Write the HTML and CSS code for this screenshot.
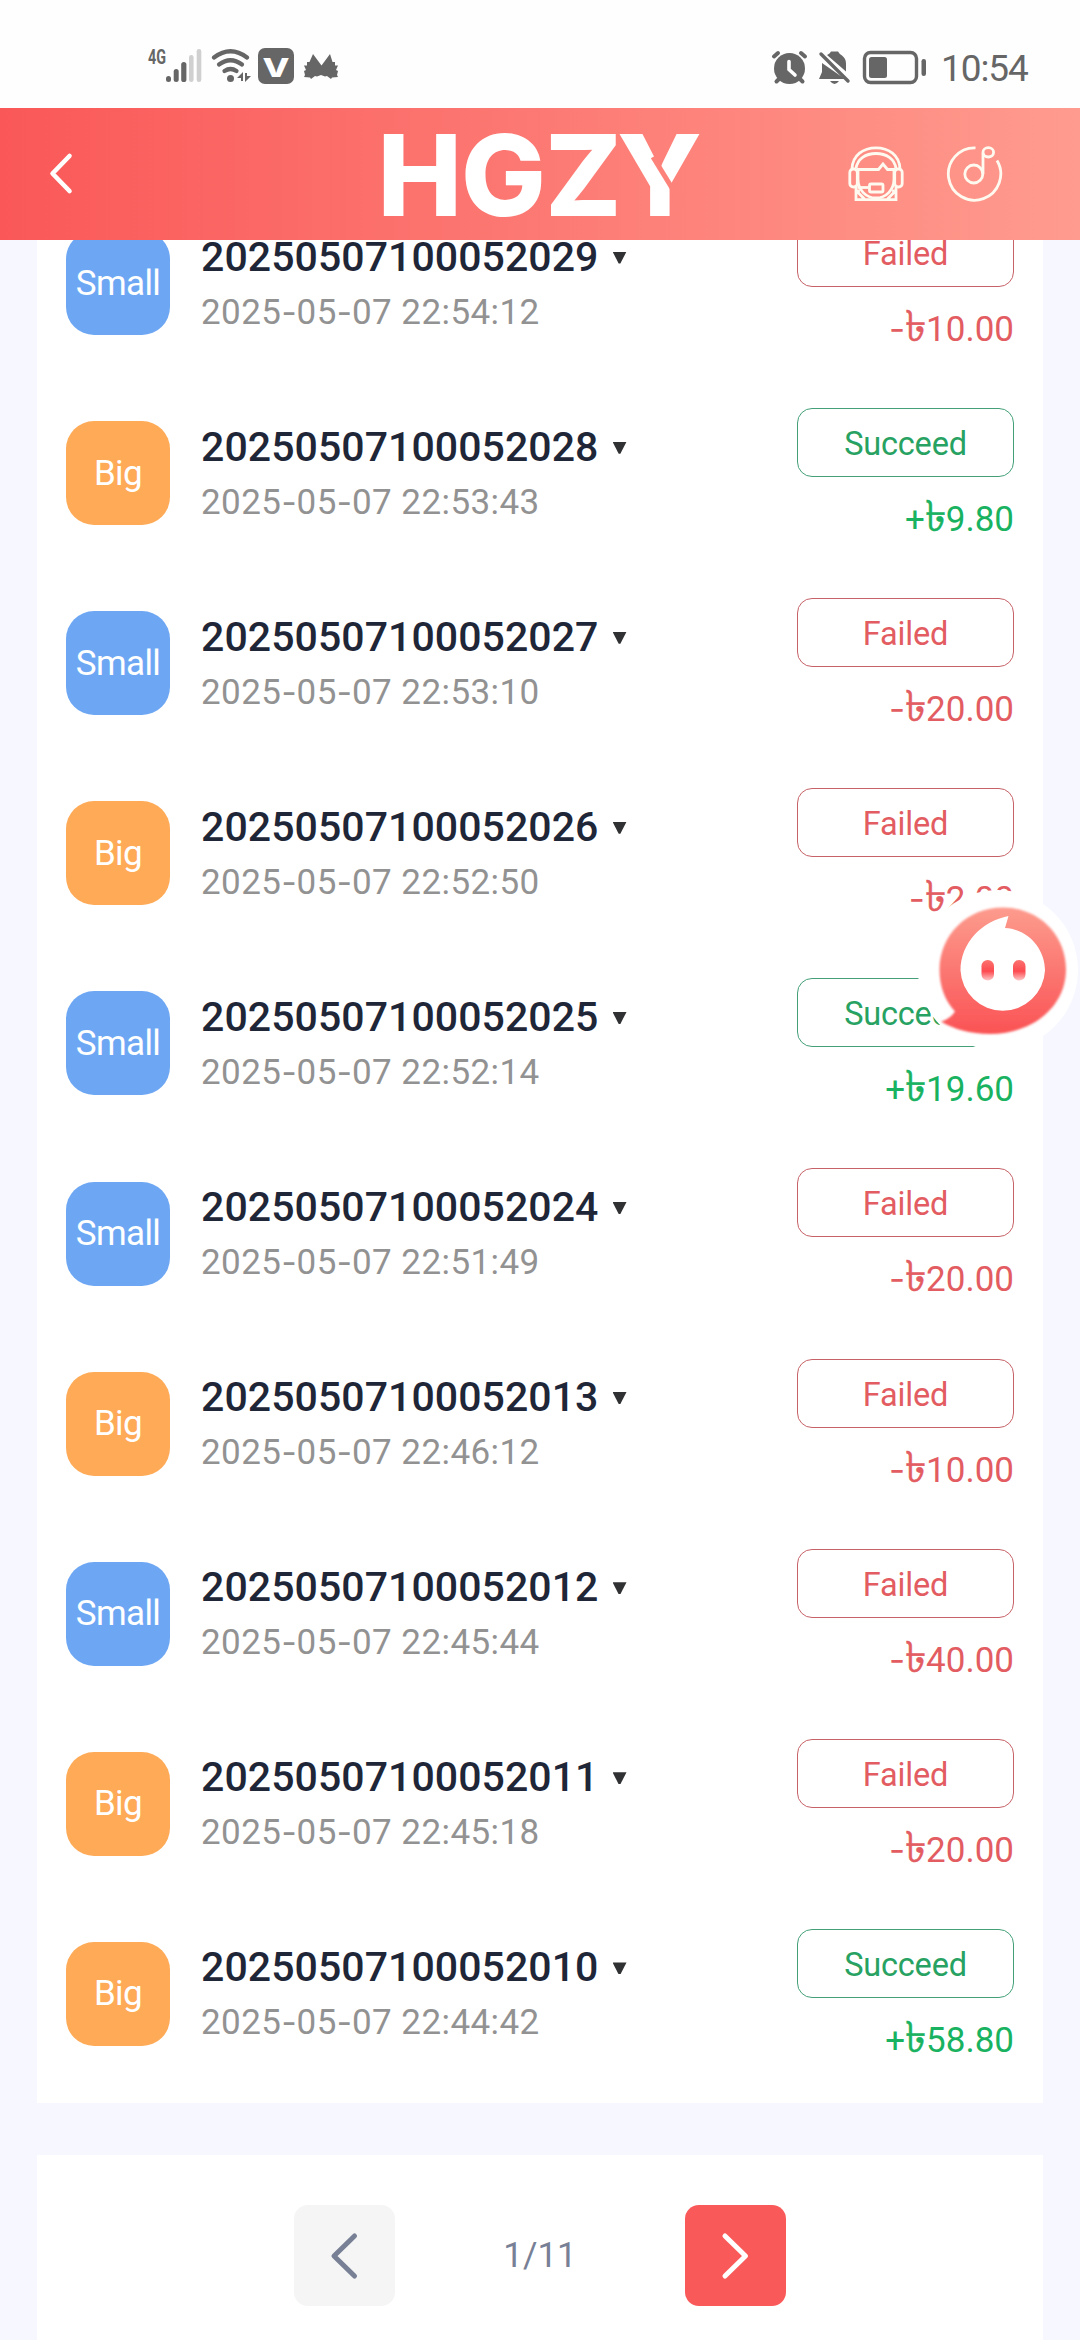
FILE: index.html
```html
<!DOCTYPE html>
<html lang="en">
<head>
<meta charset="utf-8">
<title>HGZY</title>
<link rel="stylesheet" href="styles.css">
</head>
<body>
<div class="screen">
  <div class="status-bar">
    <svg class="status-left" width="200" height="44" viewBox="144 46 200 44" fill="#666">
      <text x="148" y="64" class="net" textLength="18" lengthAdjust="spacingAndGlyphs">4G</text>
      <rect x="166" y="76" width="5" height="6" rx="2.5"/>
      <rect x="173.700" y="69" width="5" height="13" rx="2.5"/>
      <rect x="181.200" y="62" width="5.200" height="20" rx="2.6"/>
      <g fill="#d0d0d0"><rect x="189" y="55" width="4.600" height="27" rx="2.300"/><rect x="196.700" y="49" width="4.600" height="33" rx="2.300"/></g>
      <g fill="none" stroke="#666" stroke-width="4.200" stroke-linecap="round">
        <path d="M214 57.500Q230.500 45 247 57.500"/><path d="M219 64.500Q230.500 56 242 64.500"/><path d="M224.500 71Q230.500 67 236.500 71"/>
      </g>
      <circle cx="230.500" cy="78.500" r="3.500"/>
      <path d="M237 78l6-6v9h-2v-3zM245 73h2v3l4 0-6 6z"/>
      <rect x="258" y="48" width="36" height="36" rx="7"/>
      <text x="276" y="76.500" class="vmark" text-anchor="middle" textLength="27" lengthAdjust="spacingAndGlyphs">V</text>
      <path d="M313 54l8.500 11.500L330 54l2.500 8h2.500v3.500h3l-2 4.500 2 1-1 4 1 2-6 .5-1 1.500-4-3-2 .5-4-1.500-4 1.500-2-.5-4 3-1-1.500-6-.5 1-2-1-4 2-1-2-4.500h3V62h2.500z"/>
    </svg>
    <div class="status-right">
      <svg width="156" height="40" viewBox="771 47 156 40" fill="#666">
        <circle cx="789.500" cy="67.500" r="15.500"/>
        <g stroke="#666" stroke-width="4" stroke-linecap="round" fill="none"><path d="M774 55.500l4-3.500M805 55.500l-4-3.500M779 78l-2.500 2.500M800 78l2.500 2.500"/></g>
        <path d="M789 60.500v8l6 5.500" fill="none" stroke="#fff" stroke-width="3.600" stroke-linecap="round"/>
        <path d="M822 62v9l-3 7h26zM827 54q3-1.500 4-3.500h7q1 2 4 4 4 3 4 8v8z"/>
        <path d="M830 80h9q-4.500 6-9 0z"/>
        <path d="M821 53l27 27" stroke="#666" stroke-width="3.400" stroke-linecap="round"/>
        <rect x="864.500" y="51.500" width="52" height="30" rx="6" fill="none" stroke="#666" stroke-width="3.400"/>
        <rect x="869" y="56" width="18" height="21" rx="2.500"/>
        <rect x="921.500" y="58" width="4.500" height="17" rx="2.250"/>
      </svg>
      <span class="clock">10:54</span>
    </div>
  </div>

  <header class="nav">
    <svg class="back" width="26" height="44" viewBox="48 150 26 44"><path d="M69.500 154L52.500 171.500L69.500 189" fill="none" stroke="#fff" stroke-width="4.600" stroke-linecap="round" stroke-linejoin="round"/></svg>
    <svg class="logo" width="330" height="132" viewBox="376 108 330 132">
      <text class="wordmark" y="215.500" x="377.500 461 545 617">HGZY</text>
      <path d="M653 157L680 201" stroke="#fd827a" stroke-width="5"/>
    </svg>
    <div class="nav-icons">
      <svg width="58" height="58" viewBox="846.500 145 58 58" fill="none" stroke="#fffaf0" stroke-width="2.800">
        <path d="M851.500 169C852 155 863 147.800 875.500 147.800S899 155 899.500 169"/>
        <path d="M855.500 168.500C857 159 865 153.500 875.500 153.500S894 159 895.500 168.500"/>
        <path d="M856.500 169.500h21.500l4.500-5.500 4.500 5.500h8"/>
        <rect x="849.300" y="169" width="7.500" height="18" rx="3.500"/><rect x="894.200" y="169" width="7.500" height="18" rx="3.500"/>
        <path d="M857.500 169v10c0 11 8 19 18 19s18-8 18-19v-10"/>
        <path d="M855.500 187v12.700h40V187M858 189.500v3.500l6 6M893 189.500v3.500l-6 6"/>
        <path d="M857 187.500h11"/><rect x="869" y="184" width="13.500" height="8" rx="1.500"/>
      </svg>
      <svg width="58" height="58" viewBox="944.500 145 58 58" fill="none" stroke="#fffaf0" stroke-width="2.800">
        <path d="M975 147.800A26.200 26.200 0 1 0 996.500 160.500"/>
        <circle cx="973.300" cy="174" r="9"/><path d="M982.500 174v-21"/><ellipse cx="987.800" cy="152.300" rx="5.300" ry="4.700"/>
      </svg>
    </div>
  </header>

  <main class="content">
    <section class="records">
      <article class="row"><div class="badge small">Small</div><div class="info"><div class="issue">20250507100052029<i class="caret"></i></div><div class="time">2025<b>-</b>05<b>-</b>07 22:54:12</div></div><div class="result failed"><div class="state">Failed</div><div class="amount"><b>-</b><span class="taka">৳</span>10.00</div></div></article>
      <article class="row"><div class="badge big">Big</div><div class="info"><div class="issue">20250507100052028<i class="caret"></i></div><div class="time">2025<b>-</b>05<b>-</b>07 22:53:43</div></div><div class="result succeed"><div class="state">Succeed</div><div class="amount">+<span class="taka">৳</span>9.80</div></div></article>
      <article class="row"><div class="badge small">Small</div><div class="info"><div class="issue">20250507100052027<i class="caret"></i></div><div class="time">2025<b>-</b>05<b>-</b>07 22:53:10</div></div><div class="result failed"><div class="state">Failed</div><div class="amount"><b>-</b><span class="taka">৳</span>20.00</div></div></article>
      <article class="row"><div class="badge big">Big</div><div class="info"><div class="issue">20250507100052026<i class="caret"></i></div><div class="time">2025<b>-</b>05<b>-</b>07 22:52:50</div></div><div class="result failed"><div class="state">Failed</div><div class="amount"><b>-</b><span class="taka">৳</span>2.00</div></div></article>
      <article class="row"><div class="badge small">Small</div><div class="info"><div class="issue">20250507100052025<i class="caret"></i></div><div class="time">2025<b>-</b>05<b>-</b>07 22:52:14</div></div><div class="result succeed"><div class="state">Succeed</div><div class="amount">+<span class="taka">৳</span>19.60</div></div></article>
      <article class="row"><div class="badge small">Small</div><div class="info"><div class="issue">20250507100052024<i class="caret"></i></div><div class="time">2025<b>-</b>05<b>-</b>07 22:51:49</div></div><div class="result failed"><div class="state">Failed</div><div class="amount"><b>-</b><span class="taka">৳</span>20.00</div></div></article>
      <article class="row"><div class="badge big">Big</div><div class="info"><div class="issue">20250507100052013<i class="caret"></i></div><div class="time">2025<b>-</b>05<b>-</b>07 22:46:12</div></div><div class="result failed"><div class="state">Failed</div><div class="amount"><b>-</b><span class="taka">৳</span>10.00</div></div></article>
      <article class="row"><div class="badge small">Small</div><div class="info"><div class="issue">20250507100052012<i class="caret"></i></div><div class="time">2025<b>-</b>05<b>-</b>07 22:45:44</div></div><div class="result failed"><div class="state">Failed</div><div class="amount"><b>-</b><span class="taka">৳</span>40.00</div></div></article>
      <article class="row"><div class="badge big">Big</div><div class="info"><div class="issue">20250507100052011<i class="caret"></i></div><div class="time">2025<b>-</b>05<b>-</b>07 22:45:18</div></div><div class="result failed"><div class="state">Failed</div><div class="amount"><b>-</b><span class="taka">৳</span>20.00</div></div></article>
      <article class="row"><div class="badge big">Big</div><div class="info"><div class="issue">20250507100052010<i class="caret"></i></div><div class="time">2025<b>-</b>05<b>-</b>07 22:44:42</div></div><div class="result succeed"><div class="state">Succeed</div><div class="amount">+<span class="taka">৳</span>58.80</div></div></article>
    </section>

    <nav class="pager">
      <div class="page-btn prev"><svg width="30" height="50" viewBox="0 0 30 50"><path d="M24.500 5L4 25L24.500 45" /></svg></div>
      <span class="page-num">1/11</span>
      <div class="page-btn next"><svg width="30" height="50" viewBox="0 0 30 50"><path d="M5 5L25.500 25L5 45"/></svg></div>
    </nav>
  </main>

  <svg class="assistant" width="162" height="162" viewBox="917 889 162 162">
    <defs>
      <linearGradient id="bubble" x1="0" y1="0" x2="0" y2="1"><stop offset="0" stop-color="#fd9c8e"/><stop offset="1" stop-color="#fa5355"/></linearGradient>
      <linearGradient id="eye" x1="0" y1="0" x2="0" y2="1"><stop offset="0" stop-color="#fb7370"/><stop offset=".55" stop-color="#fc4b50"/><stop offset="1" stop-color="#ffc9c9"/></linearGradient>
      <filter id="soft" x="-5%" y="-5%" width="110%" height="110%"><feGaussianBlur stdDeviation=".9"/></filter>
    </defs>
    <circle cx="998" cy="970" r="80" fill="#fff"/>
    <path filter="url(#soft)" fill="url(#bubble)" d="M1003 907.500C1039 907.500 1066 935 1066 969C1066 1009 1030 1034 990 1034C970 1034 953 1029 941 1021.500Q950 1019 955 1011.500C945 1001 939.500 986 939.500 970C939.500 935 967 907.500 1003 907.500Z"/>
    <path fill="#fff" d="M1008.500 916L1005 928C1027 929 1045 948 1045 970.500A42.300 42.300 0 0 1 960.500 970.500C960.500 943 982 921 1008.500 916Z"/>
    <rect x="981.500" y="960" width="12.500" height="20.500" rx="6.200" fill="url(#eye)"/>
    <rect x="1013" y="960" width="12.500" height="20.500" rx="6.200" fill="url(#eye)"/>
  </svg>
</div>
</body>
</html>
```
FILE: styles.css
```css
* { box-sizing: border-box; }
body { margin: 0; font-family: Roboto, "Noto Sans", sans-serif; }
.screen {
  position: relative;
  width: 1080px;
  height: 2340px;
  overflow: hidden;
  display: flex;
  flex-direction: column;
  background: #f6f7ff;
}

.status-bar {
  height: 108px;
  flex: none;
  display: flex;
  justify-content: space-between;
  align-items: center;
  padding: 28px 50px 0 144px;
  background: #fefefe;
}
.status-right { display: flex; align-items: center; gap: 14px; }
.net { font: 700 20px Roboto, sans-serif; }
.vmark { font: 800 26px Inter, sans-serif; fill: #fff; }
.clock { font-size: 37px; line-height: 40px; padding-top: 1px; color: #666; width: 89px; letter-spacing: -1.100px; white-space: nowrap; }

.nav {
  height: 132px;
  flex: none;
  display: grid;
  grid-template-columns: 328px 330px 1fr;
  align-items: center;
  padding: 0 77px 0 48px;
  background: linear-gradient(90deg, #fa5858, #ff9b8f);
}
.logo { overflow: visible; }
.wordmark { font: 800 113px Inter, sans-serif; fill: #fff; }
.nav-icons { display: flex; justify-content: flex-end; gap: 40px; }

.content { flex: 1; min-height: 0; overflow: hidden; padding: 0 37px; }
.records { height: 1915px; margin-top: -52px; padding: 0 29px; background: #fff; }
.row { height: 190.100px; display: flex; align-items: center; }
.badge {
  width: 104px;
  height: 104px;
  flex: none;
  border-radius: 28px;
  display: flex;
  align-items: center;
  justify-content: center;
  color: #fff;
  font-size: 35px;
  letter-spacing: -.6px;
}
.small { background: #6da7f4; }
.big { background: #feaa57; }
.info { flex: 1; padding: 1px 0 0 31px; white-space: nowrap; }
.issue {
  display: flex;
  align-items: center;
  font-size: 41px;
  font-weight: 500;
  line-height: 46px;
  letter-spacing: .080px;
  color: #1e2637;
}
.caret { width: 14px; height: 12px; margin: 2px 0 0 14px; background: #303133; clip-path: polygon(0 0, 100% 0, 56% 100%, 44% 100%); }
.time { margin-top: 12px; font-size: 35px; line-height: 42px; letter-spacing: .430px; color: #929292; }
.time b, .amount b { font-family: Inter, sans-serif; font-weight: 400; font-size: 33px; line-height: 1; letter-spacing: 0; }
.amount b { font-size: 35px; }
.result { width: 217px; display: flex; flex-direction: column; align-self: flex-start; padding-top: 30px; }
.state {
  height: 69px;
  border: 1.500px solid;
  border-radius: 15px;
  text-align: center;
  font-size: 32.500px;
  line-height: 70px;
  letter-spacing: -.2px;
}
.amount { margin-top: 22px; font-size: 35px; line-height: 42px; height: 42px; text-align: right; white-space: nowrap; }
.taka { font-size: 43px; line-height: 1px; -webkit-text-stroke: .5px currentColor; }
.failed { color: #e25c61; }
.failed .state { border-color: #c76268; }
.succeed { color: #18b261; }
.succeed .state { color: #27a262; border-color: #44a078; }

.pager {
  height: 202px;
  margin-top: 52px;
  padding: 50px 257px 0;
  display: flex;
  justify-content: space-between;
  background: #fff;
}
.page-btn {
  width: 101px;
  height: 101px;
  border-radius: 14px;
  display: flex;
  align-items: center;
  justify-content: center;
}
.page-btn path { fill: none; stroke: currentColor; stroke-width: 5; stroke-linecap: round; stroke-linejoin: round; }
.prev { background: #f5f5f5; color: #788096; }
.next { background: #fa5959; color: #fff; }
.page-num { font-size: 35px; line-height: 101px; color: #788096; }

.assistant { position: absolute; left: 917px; top: 889px; }
```
